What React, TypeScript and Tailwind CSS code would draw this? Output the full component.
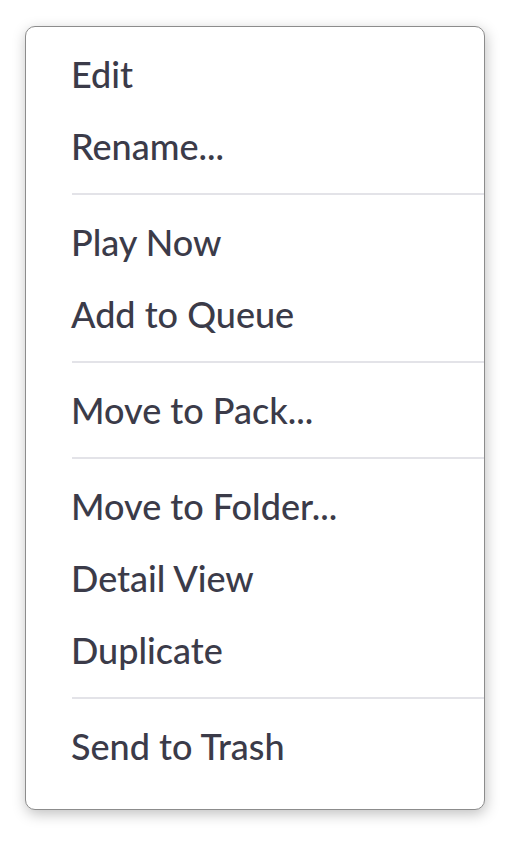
const groups: string[][] = [
  ['Edit', 'Rename...'],
  ['Play Now', 'Add to Queue'],
  ['Move to Pack...'],
  ['Move to Folder...', 'Detail View', 'Duplicate'],
  ['Send to Trash'],
]

export default function App() {
  return (
    <div className="min-h-screen bg-white pt-[26px] pl-[25px]" style={{ fontFamily: 'Lato, "Open Sans", sans-serif' }}>
      <div className="w-[460px] rounded-[10px] border border-[#8c8c8c] bg-white pt-[11px] pb-[27px] shadow-[1px_4px_14px_rgba(0,0,0,0.25)]">
        {groups.map((items, gi) => (
          <div key={gi}>
            {gi > 0 && <div className="ml-[46px] my-[11px] h-[2px] bg-[#e3e3e8]" />}
            {items.map((label) => (
              <div key={label} className="flex h-[72px] items-center pl-[45px] text-[36px] font-medium text-[#3b3b49]">
                {label}
              </div>
            ))}
          </div>
        ))}
      </div>
    </div>
  )
}
